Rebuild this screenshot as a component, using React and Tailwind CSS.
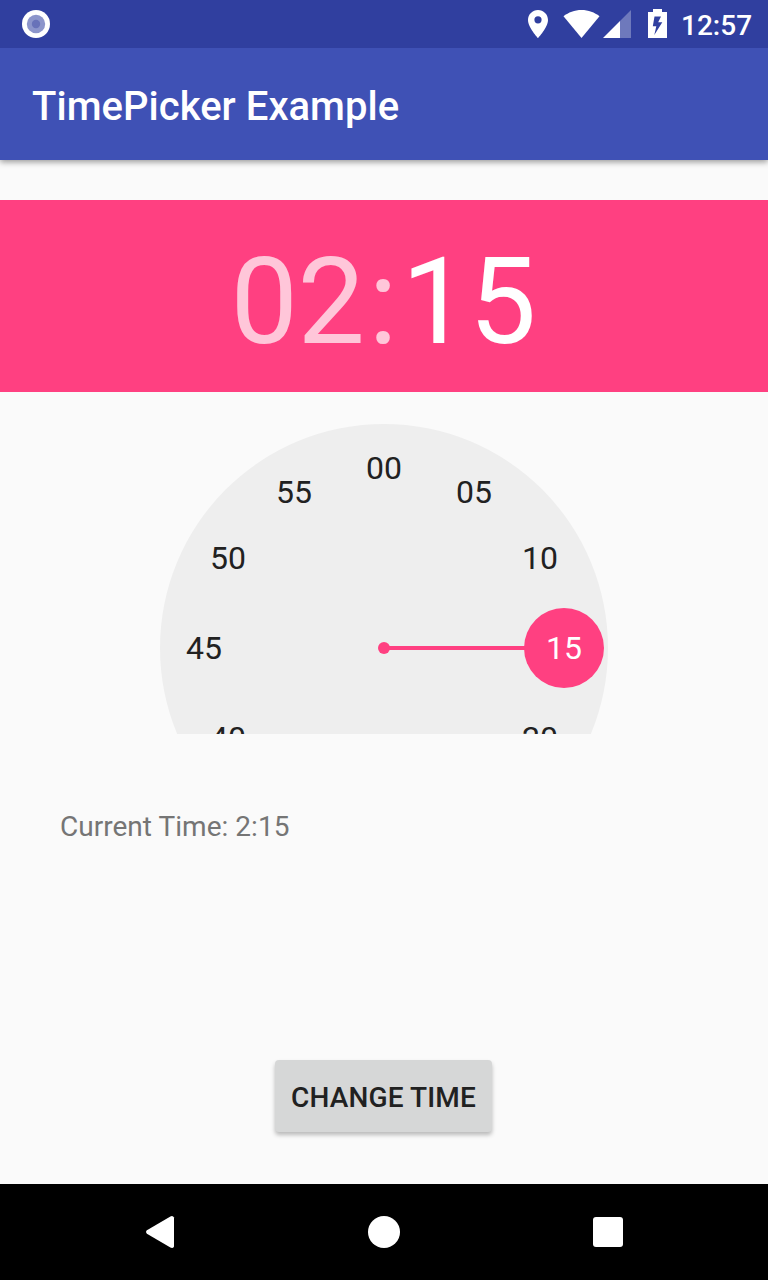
const MINUTES = ["00", "05", "10", "15", "20", null, null, null, "40", "45", "50", "55"];
const RADIUS = 180;

function StatusBar() {
  return (
    <div className="relative z-10 flex h-12 items-center bg-[#303f9f] pl-[22px] pr-4">
      <svg className="size-7" viewBox="0 0 28 28">
        <circle cx="14" cy="14" r="14" fill="#fff" />
        <circle cx="14" cy="14" r="9.2" fill="#8c95cb" />
        <circle cx="14" cy="14" r="4.2" fill="#6872b9" />
      </svg>
      <svg className="ml-auto h-12 w-[148px]" viewBox="520 0 148 48" fill="#fff">
        <path
          fillRule="evenodd"
          d="M538 10c-5.5 0-10 4.400-10 9.900C528 27.300 538 38 538 38s10-10.700 10-18.100C548 14.400 543.500 10 538 10zm0 13.400a3.600 3.600 0 1 1 0-7.200 3.600 3.600 0 0 1 0 7.200z"
        />
        <path d="M563.500 16.200C568.400 12.400 574.600 10 581.500 10s13.100 2.400 18 6.200L581.500 38z" />
        <path d="M631 10V38H620V21z" opacity=".3" />
        <path d="M620 21V38H603z" />
        <path
          fillRule="evenodd"
          d="M653 9H662V12H667V38H648V12H653zM654.500 16.500L652.800 26.300H656.300L654.300 35L662.300 22.300H658.200L661 16.500z"
        />
      </svg>
      <span className="relative top-[1.500px] ml-[13px] w-[71px] text-right text-[28px] leading-none font-medium text-white">12:57</span>
    </div>
  );
}

function Dial() {
  return (
    <div className="mt-8 h-[310px] w-[448px] self-center overflow-hidden">
      <div className="relative size-[448px] rounded-full bg-[#eeeeee]">
        <div className="absolute top-[222px] left-[224px] h-1 w-[180px] bg-[#ff4081]" />
        <div className="absolute top-[218px] left-[218px] size-3 rounded-full bg-[#ff4081]" />
        {MINUTES.map((label, i) => {
          if (!label) return null;
          const angle = (i * Math.PI) / 6;
          return (
            <div
              key={label}
              className={
                "absolute flex size-20 items-center justify-center rounded-full text-[32px] leading-none " +
                (label === "15" ? "bg-[#ff4081] text-white" : "text-[#212121]")
              }
              style={{
                left: Math.round(184 + RADIUS * Math.sin(angle)),
                top: Math.round(184 - RADIUS * Math.cos(angle)),
              }}
            >
              {label}
            </div>
          );
        })}
      </div>
    </div>
  );
}

function NavBar() {
  return (
    <div className="grid h-24 grid-cols-3 place-items-center bg-black px-12">
      <svg className="size-8" viewBox="0 0 32 32" fill="#fff">
        <path d="M2.900 14.300L26.400 .4Q29 -.8 30 1.600V30.400Q29 32.800 26.400 31.600L2.900 17.700Q1.200 16 2.900 14.300z" />
      </svg>
      <div className="size-8 rounded-full bg-white" />
      <div className="size-[30px] rounded-[3px] bg-white" />
    </div>
  );
}

export default function App() {
  return (
    <div className="flex h-[1280px] w-[768px] flex-col overflow-hidden bg-[#fafafa] font-['Roboto',sans-serif]">
      <StatusBar />
      <header className="flex h-28 items-center bg-[#3f51b5] px-8 pt-1.5 shadow-[0_2px_6px_rgba(0,0,0,0.4)]">
        <h1 className="text-[40px] leading-none font-medium tracking-[0.03px] text-white">TimePicker Example</h1>
      </header>
      <main className="flex flex-1 flex-col pt-10">
        <div className="flex h-48 items-center justify-center bg-[#ff4081] pt-3 text-[120px] leading-none text-white">
          <span className="-ml-px tracking-[-0.500px] text-white/70">02</span>
          <span className="mr-1 ml-1 text-white/70">:</span>
          <span>15</span>
        </div>
        <Dial />
        <p className="mt-[78px] ml-[60px] text-[28px] leading-[30px] tracking-[0.03px] text-[#757575]">Current Time: 2:15</p>
        <button className="mt-auto mb-[52px] ml-[275px] h-[72px] w-[217px] rounded-[4px] bg-[#d6d7d7] pt-1 text-[28px] leading-none font-medium tracking-[0.15px] text-[#212121] shadow-[0_3px_4px_rgba(0,0,0,0.26)]">
          CHANGE TIME
        </button>
      </main>
      <NavBar />
    </div>
  );
}
